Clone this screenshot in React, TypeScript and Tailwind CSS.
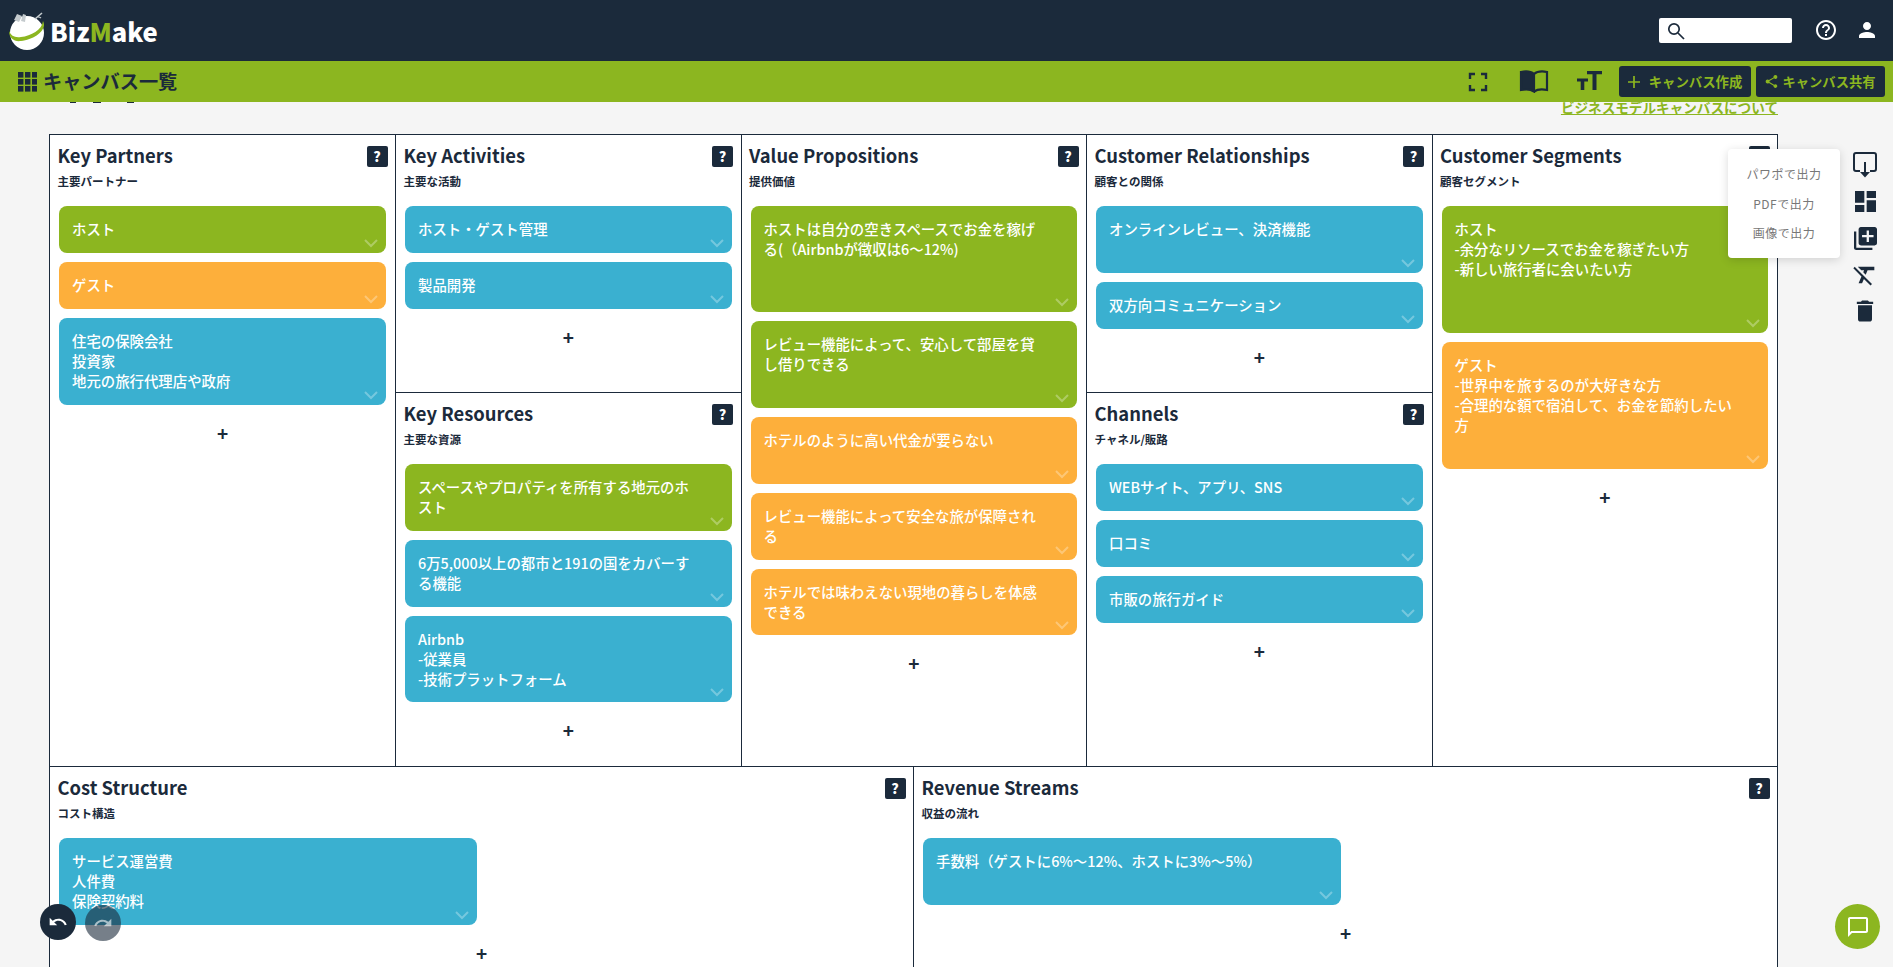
type Tone = 'green' | 'blue' | 'orange';

interface Note {
  text: string;
  tone: Tone;
  h: number;
}

const toneClass: Record<Tone, string> = {
  green: 'bg-[#8cb620]',
  blue: 'bg-[#3ab0d0]',
  orange: 'bg-[#fdaf3b]',
};

const FONT = "font-['Noto_Sans_CJK_JP','Noto_Sans',sans-serif]";

function Chevron() {
  return (
    <svg
      className="absolute right-[8px] bottom-[5px] text-white/30"
      width="14"
      height="9"
      viewBox="0 0 14 9"
      fill="none"
      stroke="currentColor"
      strokeWidth="2"
    >
      <path d="M1 1l6 6 6-6" />
    </svg>
  );
}

function Card({ note, className = '' }: { note: Note; className?: string }) {
  return (
    <div
      className={`relative rounded-[8px] pl-[13px] pr-[32px] pt-[13px] text-[14.4px] leading-[20px] font-medium text-white whitespace-pre-line [text-spacing-trim:space-all] ${toneClass[note.tone]} ${className}`}
      style={{ height: note.h }}
    >
      {note.text}
      <Chevron />
    </div>
  );
}

function Section({
  title,
  sub,
  notes,
  cardWidth,
  className = '',
}: {
  title: string;
  sub: string;
  notes: Note[];
  cardWidth?: string;
  className?: string;
}) {
  return (
    <div className={`relative ${className}`}>
      <div className="h-[71px] pl-[7.5px] pt-[5px]">
        <div className="text-[18.4px] leading-[30px] font-bold text-[#1b2a3b]">{title}</div>
        <div className="mt-[3px] text-[11.5px] leading-[16px] font-bold text-[#1b2a3b]">{sub}</div>
        <button className="absolute right-[7.5px] top-[11px] flex h-[21px] w-[21px] items-center justify-center rounded-[2px] bg-[#1b2a3b] text-[14px] font-black text-white">
          ?
        </button>
      </div>
      <div className="flex flex-col gap-[9px] pl-[9px] pr-[9px]">
        {notes.map((n, i) => (
          <Card key={i} note={n} className={cardWidth} />
        ))}
      </div>
      <div className="mt-[19px] text-center text-[19px] leading-[18px] font-bold text-[#1b2a3b]">+</div>
    </div>
  );
}

function Logo() {
  return (
    <svg width="37" height="38" viewBox="0 0 37 38">
      <circle cx="18" cy="21" r="17" fill="#fff" />
      <path d="M5 8l3-6 5 2-3 6zM12 9l2-7 3 1-1 7z" fill="#c4cacd" />
      <path d="M26 7l7-6" stroke="#c4cacd" strokeWidth="1.6" />
      <path d="M29 5c1 0 2 0 3 1" stroke="#c4cacd" strokeWidth="1.2" fill="none" />
      <path d="M34 9c5 9-9 19-22 20C5 30 0 26 0 19c2 5 6 7 12 6 10-1 21-7 22-16z" fill="#8cb620" />
    </svg>
  );
}

const partners: Note[] = [
  { text: 'ホスト', tone: 'green', h: 47 },
  { text: 'ゲスト', tone: 'orange', h: 47 },
  { text: '住宅の保険会社\n投資家\n地元の旅行代理店や政府', tone: 'blue', h: 87 },
];
const activities: Note[] = [
  { text: 'ホスト・ゲスト管理', tone: 'blue', h: 47 },
  { text: '製品開発', tone: 'blue', h: 47 },
];
const resources: Note[] = [
  { text: 'スペースやプロパティを所有する地元のホスト', tone: 'green', h: 67 },
  { text: '6万5,000以上の都市と191の国をカバーする機能', tone: 'blue', h: 67 },
  { text: 'Airbnb\n-従業員\n-技術プラットフォーム', tone: 'blue', h: 86 },
];
const values: Note[] = [
  { text: 'ホストは自分の空きスペースでお金を稼げる(（Airbnbが徴収は6〜12%)', tone: 'green', h: 106 },
  { text: 'レビュー機能によって、安心して部屋を貸し借りできる', tone: 'green', h: 87 },
  { text: 'ホテルのように高い代金が要らない', tone: 'orange', h: 67 },
  { text: 'レビュー機能によって安全な旅が保障される', tone: 'orange', h: 67 },
  { text: 'ホテルでは味わえない現地の暮らしを体感できる', tone: 'orange', h: 66 },
];
const relations: Note[] = [
  { text: 'オンラインレビュー、決済機能', tone: 'blue', h: 67 },
  { text: '双方向コミュニケーション', tone: 'blue', h: 47 },
];
const channels: Note[] = [
  { text: 'WEBサイト、アプリ、SNS', tone: 'blue', h: 47 },
  { text: '口コミ', tone: 'blue', h: 47 },
  { text: '市販の旅行ガイド', tone: 'blue', h: 47 },
];
const segments: Note[] = [
  { text: 'ホスト\n-余分なリソースでお金を稼ぎたい方\n-新しい旅行者に会いたい方', tone: 'green', h: 127 },
  { text: 'ゲスト\n-世界中を旅するのが大好きな方\n-合理的な額で宿泊して、お金を節約したい方', tone: 'orange', h: 127 },
];

export default function App() {
  return (
    <div className={`relative flex h-screen flex-col overflow-hidden bg-[#f5f5f5] ${FONT}`}>
      {/* top bar */}
      <header className="flex h-[61px] shrink-0 items-center bg-[#1b2a3b] pl-[9px] pr-[14px]">
        <Logo />
        <span className="ml-[4px] text-[25.5px] leading-none font-black text-white">
          Biz<span className="text-[#8cb620]">M</span>ake
        </span>
        <div className="ml-auto flex h-[25px] w-[133px] items-center rounded-[2px] bg-white pl-[8px]">
          <svg width="18" height="18" viewBox="0 0 18 18" fill="none" stroke="#1b2a3b" strokeWidth="1.7">
            <circle cx="7" cy="7" r="5.2" />
            <path d="M11 11l6 6" />
          </svg>
        </div>
        <svg className="ml-[24px] -mt-[2px]" width="20" height="20" viewBox="2 2 20 20" fill="#fff">
          <path d="M11 18h2v-2h-2v2zm1-16C6.480 2 2 6.480 2 12s4.480 10 10 10 10-4.480 10-10S17.520 2 12 2zm0 18c-4.410 0-8-3.590-8-8s3.590-8 8-8 8 3.590 8 8-3.590 8-8 8zm0-14c-2.210 0-4 1.790-4 4h2c0-1.100.9-2 2-2s2 .9 2 2c0 2-3 1.750-3 5h2c0-2.250 3-2.500 3-5 0-2.210-1.790-4-4-4z" />
        </svg>
        <svg className="ml-[19px] -mt-[2px]" width="24" height="24" viewBox="0 0 24 24" fill="#fff">
          <path d="M12 12c2.210 0 4-1.790 4-4s-1.790-4-4-4-4 1.790-4 4 1.790 4 4 4zm0 2c-2.670 0-8 1.340-8 4v2h16v-2c0-2.660-5.330-4-8-4z" />
        </svg>
      </header>

      {/* green toolbar */}
      <div className="relative z-10 flex h-[41px] shrink-0 items-center bg-[#8cb620] pl-[18px] pr-[8px]">
        <svg width="19" height="20" viewBox="0 0 19 20" fill="#1b2a3b">
          {[0, 7, 14].map((y) =>
            [0, 7, 14].map((x) => <rect key={`${x}-${y}`} x={x} y={y} width="5.4" height="5.6" />),
          )}
        </svg>
        <span className="ml-[6px] text-[19.2px] font-bold text-[#1b2a3b]">キャンバス一覧</span>
        <div className="ml-auto flex items-center text-[#1b2a3b]">
          <svg width="20" height="20" viewBox="0 0 20 20" fill="none" stroke="currentColor" strokeWidth="2.4">
            <path d="M2 7V2h5M13 2h5v5M18 13v5h-5M7 18H2v-5" />
          </svg>
          <svg className="ml-[31px]" width="30" height="23" viewBox="0 0 30 23" fill="none" stroke="currentColor" strokeWidth="2.2">
            <path d="M15 4c3-2.500 8-3 13-2v18c-5-1-10-.5-13 1.500" />
            <path d="M15 4C12 1.500 7 1 2 2v18c5-1 10-.5 13 1.500z" fill="currentColor" />
          </svg>
          <svg className="ml-[27px] -mt-[2px]" width="26" height="20" viewBox="0 0 26 20" fill="currentColor">
            <path d="M11 0h15v3.200h-5.500V19h-4V3.200H11z" />
            <path d="M1 7.500h11v3h-3.700V19H4.700v-8.500H1z" />
          </svg>
          <button className="ml-[17px] flex h-[31px] w-[132px] items-center justify-center gap-[9px] rounded-[3px] bg-[#1b2a3b] text-[13.4px] font-bold text-[#8cb620]">
            <svg width="12" height="12" viewBox="0 0 12 12" stroke="currentColor" strokeWidth="1.7">
              <path d="M6 0v12M0 6h12" />
            </svg>
            キャンバス作成
          </button>
          <button className="ml-[5px] flex h-[31px] w-[129px] items-center justify-center gap-[4px] rounded-[3px] bg-[#1b2a3b] text-[13.3px] font-bold text-[#8cb620]">
            <svg width="13" height="13" viewBox="3 2 18 20" fill="currentColor">
              <path d="M18 16.080c-.76 0-1.440.3-1.960.77L8.910 12.700c.05-.23.09-.46.09-.7s-.04-.47-.09-.7l7.050-4.110c.54.5 1.250.81 2.040.81 1.660 0 3-1.340 3-3s-1.340-3-3-3-3 1.340-3 3c0 .24.04.47.09.7L8.040 9.810C7.500 9.310 6.790 9 6 9c-1.660 0-3 1.340-3 3s1.340 3 3 3c.79 0 1.500-.31 2.040-.81l7.120 4.160c-.05.21-.08.43-.08.650 0 1.610 1.310 2.920 2.920 2.920s2.920-1.310 2.920-2.920-1.310-2.920-2.920-2.920z" />
            </svg>
            キャンバス共有
          </button>
        </div>
      </div>

      {/* canvas area */}
      <main className="relative min-h-0 flex-1 overflow-hidden">
        {/* bottoms of the scrolled-away page title */}
        <span className="absolute left-[70px] top-0 h-[1px] w-[6px] bg-[#1b2a3b]" />
        <span className="absolute left-[93px] top-0 h-[1px] w-[8px] bg-[#1b2a3b]" />
        <span className="absolute left-[127px] top-0 h-[1px] w-[7px] bg-[#1b2a3b]" />
        <div className="flex h-[32px] w-[1778px] justify-end">
          <a className="-mt-[5px] h-[21px] text-[13.6px] leading-[21px] font-bold text-[#8cb620] underline">
            ビジネスモデルキャンバスについて
          </a>
        </div>
        <div className="ml-[49px] w-[1729px] border border-[#1b2a3b] bg-white">
          <div className="grid h-[632px] grid-cols-[346px_345.5px_345.5px_345.5px_1fr] border-b border-[#1b2a3b]">
            <Section title="Key Partners" sub="主要パートナー" notes={partners} className="border-r border-[#1b2a3b]" />
            <div className="flex flex-col border-r border-[#1b2a3b]">
              <Section title="Key Activities" sub="主要な活動" notes={activities} className="h-[258px] border-b border-[#1b2a3b]" />
              <Section title="Key Resources" sub="主要な資源" notes={resources} className="flex-1" />
            </div>
            <Section title="Value Propositions" sub="提供価値" notes={values} className="border-r border-[#1b2a3b]" />
            <div className="flex flex-col border-r border-[#1b2a3b]">
              <Section title="Customer Relationships" sub="顧客との関係" notes={relations} className="h-[258px] border-b border-[#1b2a3b]" />
              <Section title="Channels" sub="チャネル/販路" notes={channels} className="flex-1" />
            </div>
            <Section title="Customer Segments" sub="顧客セグメント" notes={segments} />
          </div>
          <div className="grid h-[400px] grid-cols-[864px_1fr]">
            <Section
              title="Cost Structure"
              sub="コスト構造"
              notes={[{ text: 'サービス運営費\n人件費\n保険契約料', tone: 'blue', h: 87 }]}
              cardWidth="w-[418px]"
              className="border-r border-[#1b2a3b]"
            />
            <Section
              title="Revenue Streams"
              sub="収益の流れ"
              notes={[{ text: '手数料（ゲストに6%〜12%、ホストに3%〜5%）', tone: 'blue', h: 67 }]}
              cardWidth="w-[418px]"
            />
          </div>
        </div>
      </main>

      {/* export menu */}
      <div className="absolute left-[1728px] top-[149px] z-20 flex h-[109px] w-[112px] flex-col items-center rounded-[4px] bg-white pt-[13px] text-[12px] tracking-[0.5px] text-[#777] shadow-[0_2px_10px_rgba(0,0,0,0.15)]">
        {['パワポで出力', 'PDFで出力', '画像で出力'].map((label) => (
          <span key={label} className="h-[29.5px] leading-[24px]">
            {label}
          </span>
        ))}
      </div>

      {/* side tools */}
      <div className="absolute left-[1845px] top-[147px] z-20 flex w-[40px] flex-col text-[#1b2a3b] [&>span]:flex [&>span]:h-[36.5px] [&>span]:items-center [&>span]:justify-center">
        <span>
          <svg width="24" height="26" viewBox="0 0 24 26" fill="none" stroke="currentColor" strokeWidth="2">
            <path d="M7 19H3a2 2 0 0 1-2-2V3a2 2 0 0 1 2-2h18a2 2 0 0 1 2 2v14a2 2 0 0 1-2 2h-4" />
            <path d="M12 10v12" />
            <path d="M7 20h10l-5 5.500z" fill="currentColor" stroke="none" />
          </svg>
        </span>
        <span>
          <svg width="21" height="21" viewBox="3 3 18 18" fill="currentColor">
            <path d="M3 13h8V3H3v10zm0 8h8v-6H3v6zm10 0h8V11h-8v10zm0-18v6h8V3h-8z" />
          </svg>
        </span>
        <span>
          <svg width="23" height="23" viewBox="2 2 20 20" fill="currentColor">
            <path d="M4 6H2v14c0 1.100.9 2 2 2h14v-2H4V6zm16-4H8c-1.100 0-2 .9-2 2v12c0 1.100.9 2 2 2h12c1.100 0 2-.9 2-2V4c0-1.100-.9-2-2-2zm-1 9h-4v4h-2v-4H9V9h4V5h2v4h4v2z" />
          </svg>
        </span>
        <span>
          <svg width="28" height="28" viewBox="0 0 24 24" fill="currentColor">
            <path d="M3.270 5L2 6.270l6.970 6.970L6.500 19h3l1.570-3.660L16.730 21 18 19.730 3.550 5.270 3.270 5zM6 5v.18L8.820 8h2.400l-.72 1.680 2.100 2.100L14.210 8H20V5H6z" />
          </svg>
        </span>
        <span>
          <svg width="28" height="28" viewBox="0 0 24 24" fill="currentColor">
            <path d="M6 19c0 1.100.9 2 2 2h8c1.100 0 2-.9 2-2V7H6v12zM19 4h-3.500l-1-1h-5l-1 1H5v2h14V4z" />
          </svg>
        </span>
      </div>

      {/* undo / redo */}
      <button className="absolute left-[40px] top-[904px] z-20 flex h-[36px] w-[36px] items-center justify-center rounded-full bg-[#1b2a3b]">
        <svg width="20" height="20" viewBox="0 0 24 24" fill="#fff">
          <path d="M12.500 8c-2.650 0-5.050.99-6.900 2.600L2 7v9h9l-3.620-3.620c1.390-1.160 3.160-1.880 5.120-1.880 3.540 0 6.550 2.310 7.600 5.500l2.370-.78C21.080 11.030 17.150 8 12.500 8z" />
        </svg>
      </button>
      <button className="absolute left-[85px] top-[905px] z-20 flex h-[36px] w-[36px] items-center justify-center rounded-full bg-[#1b2a3b]/60">
        <svg width="20" height="20" viewBox="0 0 24 24" fill="#fff" opacity="0.6">
          <path d="M18.400 10.600C16.550 8.990 14.150 8 11.500 8c-4.650 0-8.580 3.030-9.960 7.220L3.900 16c1.050-3.190 4.050-5.500 7.600-5.500 1.950 0 3.730.72 5.120 1.880L13 16h9V7l-3.600 3.600z" />
        </svg>
      </button>

      {/* chat */}
      <button className="absolute left-[1835px] top-[904px] z-20 flex h-[45px] w-[45px] items-center justify-center rounded-full bg-[#8cb620]">
        <svg width="24" height="24" viewBox="0 0 24 24" fill="#fff">
          <path d="M20 2H4c-1.100 0-2 .9-2 2v18l4-4h14c1.100 0 2-.9 2-2V4c0-1.100-.9-2-2-2zm0 14H5.170L4 17.170V4h16v12z" />
        </svg>
      </button>
    </div>
  );
}
